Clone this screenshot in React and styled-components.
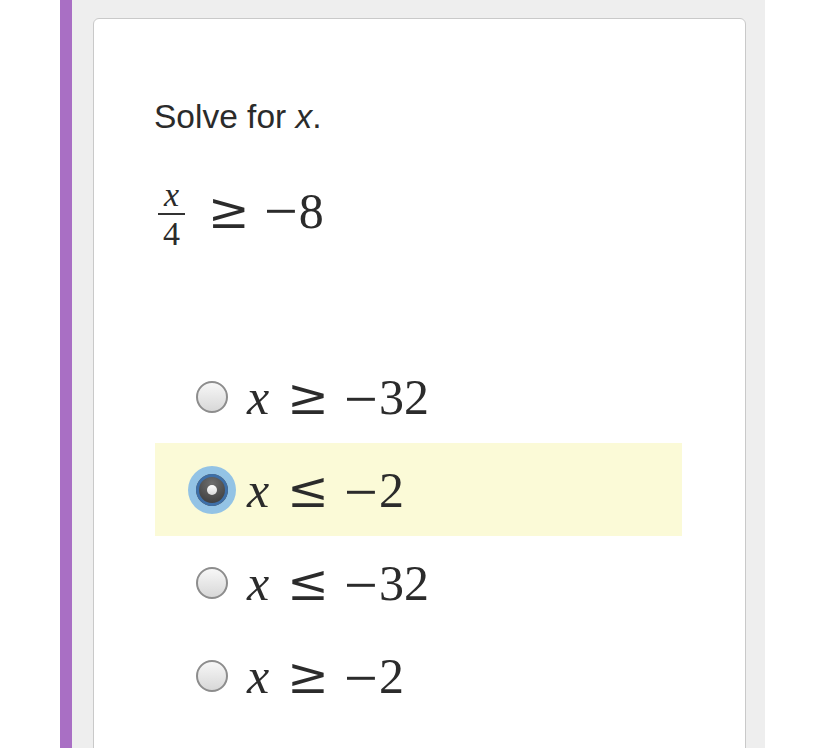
import React, { useState } from 'react';
import styled, { createGlobalStyle } from 'styled-components';

const GlobalStyle = createGlobalStyle`
  html, body {
    margin: 0;
    padding: 0;
    background: #fff;
    overflow: hidden;
  }
`;

const Page = styled.div`
  display: flex;
  height: 748px;
  padding-left: 60px;
  overflow: hidden;
`;

const AccentBar = styled.div`
  width: 12px;
  background: #a96fc4;
  flex-shrink: 0;
`;

const Gutter = styled.div`
  width: 693px;
  background: #eeeeee;
  padding: 18px 0 0 21px;
  box-sizing: border-box;
`;

const Card = styled.div`
  width: 653px;
  height: 800px;
  box-sizing: border-box;
  background: #fff;
  border: 1px solid #c9c9c9;
  border-radius: 6px;
  padding: 78px 0 0 60px;
`;

const Prompt = styled.p`
  margin: 0;
  font-family: "Liberation Sans", Arial, sans-serif;
  font-size: 33.5px;
  color: #2b2b2b;
  line-height: 40px;

  em {
    font-style: italic;
  }
`;

const Equation = styled.div`
  display: flex;
  align-items: center;
  margin-top: 34px;
  font-family: "Liberation Serif", "Times New Roman", serif;
  font-size: 50px;
  color: #2b2b2b;
  height: 80px;
`;

const Fraction = styled.span`
  display: inline-flex;
  flex-direction: column;
  align-items: center;
  font-size: 34px;
  line-height: 28px;
  margin: 6px 8px 0 4px;

  i {
    padding: 0 6px 4px;
    border-bottom: 2px solid #333;
    text-align: center;
  }
  span {
    padding-top: 5px;
  }
`;

const Rel = styled.span`
  font-family: "DejaVu Serif", serif;
  font-size: 1em;
  margin: 0 ${(p) => p.$right || 15}px 0 ${(p) => p.$left || 18}px;
`;

const Minus = styled.span`
  font-size: 1.2em;
  line-height: 0;
  vertical-align: -5px;
  margin-right: 1px;
`;

const Options = styled.div`
  margin-top: 99px;
  margin-left: 1px;
  width: 527px;
  display: flex;
  flex-direction: column;
`;

const Option = styled.label`
  display: flex;
  align-items: center;
  height: 93px;
  padding-left: 41px;
  gap: 19px;
  background: ${(p) => (p.$selected ? '#fbfad7' : 'transparent')};
  cursor: pointer;
  font-family: "Liberation Serif", "Times New Roman", serif;
  font-size: 50px;
  color: #2b2b2b;
  white-space: pre;
`;

const RadioRing = styled.span`
  width: 32px;
  height: 32px;
  border-radius: 50%;
  display: flex;
  align-items: center;
  justify-content: center;
  flex-shrink: 0;
  box-sizing: border-box;
  ${(p) =>
    p.$checked
      ? `
    border: none;
    box-shadow: 0 0 0 8px #93c3e5;
    background: radial-gradient(circle at 50% 30%, #6f6f6f, #2d2d2d);
    outline: 3px solid #3d6fa8;
    outline-offset: -3px;
  `
      : `
    border: 2px solid #8d8d8d;
    background: linear-gradient(#f7f7f7, #d8d8d8);
  `}
`;

const RadioDot = styled.span`
  width: 10px;
  height: 10px;
  border-radius: 50%;
  background: linear-gradient(#ffffff, #d9d9d9);
`;

const choices = [
  { op: '≥', val: '32' },
  { op: '≤', val: '2' },
  { op: '≤', val: '32' },
  { op: '≥', val: '2' },
];

export default function App() {
  const [picked, setPicked] = useState(1);

  return (
    <>
      <GlobalStyle />
      <Page>
        <AccentBar />
        <Gutter>
          <Card>
            <Prompt>
              Solve for <em>x</em>.
            </Prompt>
            <Equation>
              <Fraction>
                <i>x</i>
                <span>4</span>
              </Fraction>
              <Rel $left={15} $right={14}>≥</Rel>
              <Minus>−</Minus>
              <span>8</span>
            </Equation>
            <Options>
              {choices.map((c, i) => (
                <Option key={i} $selected={picked === i} onClick={() => setPicked(i)}>
                  <RadioRing $checked={picked === i}>
                    {picked === i && <RadioDot />}
                  </RadioRing>
                  <span>
                    <i>x</i>
                    <Rel>{c.op}</Rel>
                    <Minus>−</Minus>
                    {c.val}
                  </span>
                </Option>
              ))}
            </Options>
          </Card>
        </Gutter>
      </Page>
    </>
  );
}
